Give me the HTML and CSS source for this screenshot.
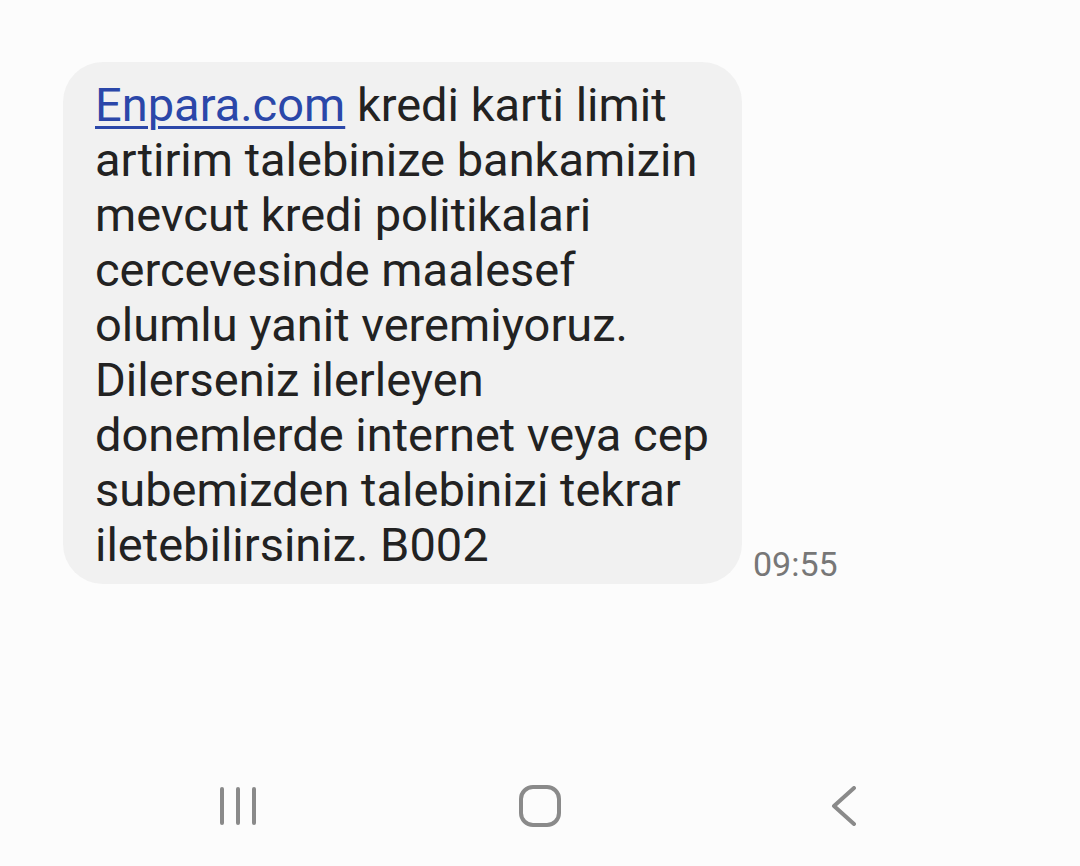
FILE: index.html
```html
<!DOCTYPE html>
<html lang="tr">
<head>
  <meta charset="UTF-8" />
  <meta name="viewport" content="width=device-width, initial-scale=1.0" />
  <title>Mesajlar</title>
  <link rel="stylesheet" href="styles.css">
</head>
<body>
  <div class="screen">
    <div class="thread">
      <div class="msg-row">
        <div class="bubble">
          <a class="link" href="#">Enpara.com</a> kredi karti limit<br>
          artirim talebinize bankamizin<br>
          mevcut kredi politikalari<br>
          cercevesinde maalesef<br>
          olumlu yanit veremiyoruz.<br>
          Dilerseniz ilerleyen<br>
          donemlerde internet veya cep<br>
          subemizden talebinizi tekrar<br>
          iletebilirsiniz. B002
        </div>
        <div class="time">09:55</div>
      </div>
    </div>

    <div class="navbar">
      <svg class="nav-recents" width="36" height="38" viewBox="0 0 36 38">
        <line x1="2" y1="2" x2="2" y2="36" />
        <line x1="18" y1="2" x2="18" y2="36" />
        <line x1="34" y1="2" x2="34" y2="36" />
      </svg>
      <svg class="nav-home" width="42" height="42" viewBox="0 0 42 42">
        <rect x="2" y="2" width="38" height="38" rx="12" ry="12" />
      </svg>
      <svg class="nav-back" width="26" height="40" viewBox="0 0 26 40">
        <polyline points="23,2 3,20 23,38" />
      </svg>
    </div>
  </div>
</body>
</html>
```

FILE: styles.css
```css
body {
  margin: 0;
  background: #fcfcfc;
  font-family: Roboto, "Noto Sans", sans-serif;
}

.screen {
  display: flex;
  flex-direction: column;
  min-height: 866px;
}

.thread {
  padding: 62px 0 0 63px;
}

.msg-row {
  display: flex;
  align-items: flex-end;
}

.bubble {
  width: 647px;
  background: #f1f1f1;
  border-radius: 40px;
  padding: 15px 0 12px 32px;
  color: #222;
  font-size: 47px;
  line-height: 55px;
}

.link {
  color: #2b47a9;
  text-decoration: underline;
  text-decoration-thickness: 3px;
  text-underline-offset: 5px;
}

.time {
  margin: 0 0 2px 11px;
  color: #777;
  font-size: 34px;
  line-height: 36px;
}

.navbar {
  margin-top: auto;
  height: 120px;
  display: flex;
  align-items: center;
  padding-left: 220px;
}

.navbar svg {
  fill: none;
  stroke: #8a8a8a;
  stroke-width: 4;
  stroke-linecap: round;
  stroke-linejoin: round;
}

.nav-home {
  margin-left: 263px;
}

.nav-back {
  margin-left: 270px;
}
```
